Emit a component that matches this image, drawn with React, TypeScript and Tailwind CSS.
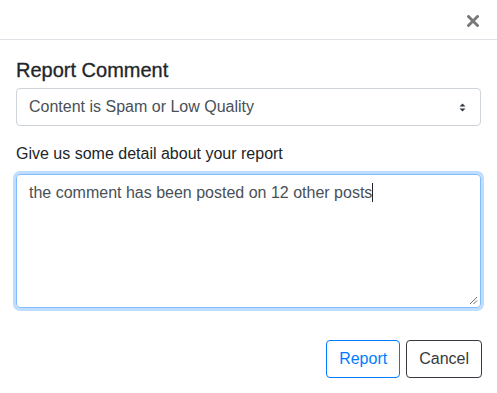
const font = { fontFamily: '"Liberation Sans", Arial, sans-serif' }

const CloseIcon = () => (
	<svg width="12" height="12" viewBox="0 0 12 12">
		<path d="M1.5 1.5 L10.5 10.5 M10.5 1.5 L1.5 10.5" stroke="#777777" strokeWidth="2.8" strokeLinecap="square" />
	</svg>
)

const SelectArrows = () => (
	<svg width="7" height="9" viewBox="0 0 7 9" className="shrink-0">
		<path d="M3.5 0.5 L6.5 3.5 L0.5 3.5 Z" fill="#343a40" />
		<path d="M3.5 8.5 L6.5 5.5 L0.5 5.5 Z" fill="#343a40" />
	</svg>
)

const ResizeGrip = () => (
	<svg width="9" height="9" viewBox="0 0 9 9" className="absolute right-[2px] bottom-[2px]">
		<path d="M1 8 L8 1 M4.5 8 L8 4.5" stroke="#6b6b6b" strokeWidth="1" />
	</svg>
)

export default function App() {
	return (
		<div className="w-[497px] h-[393px] bg-white text-[#212529]" style={font}>
			{/* header */}
			<div className="h-[40px] border-b border-[#dee2e6] flex items-start justify-end pr-[18px] pt-[15px]">
				<button className="leading-none" aria-label="Close">
					<CloseIcon />
				</button>
			</div>

			{/* body */}
			<div className="px-4 pt-[18px]">
				<h5 className="text-[20px] leading-[24px] font-medium [-webkit-text-stroke:0.3px_#212529]">Report Comment</h5>

				<div className="mt-[6px] h-[38px] border border-[#ced4da] rounded-[4px] flex items-center justify-between pl-[12px] pr-[14px] text-[16px] text-[#495057]">
					<span>Content is Spam or Low Quality</span>
					<SelectArrows />
				</div>

				<label className="block mt-[16px] text-[16px] leading-[24px] text-[#212529]">
					Give us some detail about your report
				</label>

				<div className="relative mt-[8px] h-[134px] border border-[#80bdff] rounded-[4px] shadow-[0_0_0_3px_rgba(0,123,255,0.25)] px-[12px] py-[6px] text-[16px] leading-[24px] text-[#495057]">
					<span>the comment has been posted on 12 other posts</span>
					<span className="inline-block w-px h-[19px] bg-[#212529] align-[-4px]" />
					<ResizeGrip />
				</div>
			</div>

			{/* footer */}
			<div className="flex justify-end gap-[6px] px-[15px] mt-[32px]">
				<button className="h-[38px] px-[12px] border border-[#007bff] rounded-[4px] text-[16px] text-[#007bff]">
					Report
				</button>
				<button className="h-[38px] px-[12px] border border-[#343a40] rounded-[4px] text-[16px] text-[#343a40]">
					Cancel
				</button>
			</div>
		</div>
	)
}
